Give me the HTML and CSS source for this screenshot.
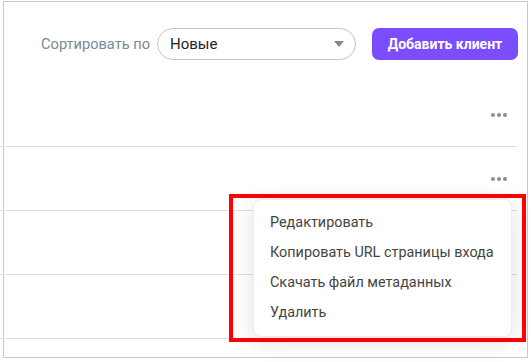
FILE: index.html
```html
<!DOCTYPE html>
<html lang="ru">
<head>
<meta charset="utf-8">
<link rel="stylesheet" href="styles.css">
</head>
<body>
<div class="frame">
  <div class="toolbar">
    <span class="sort-label">Сортировать по</span>
    <div class="select">
      <span class="select-value">Новые</span>
      <span class="caret"></span>
    </div>
    <button class="btn-add">Добавить клиент</button>
  </div>
  <div class="rows">
    <div class="row"><span class="dots"><i></i><i></i><i></i></span></div>
    <div class="row"><span class="dots"><i></i><i></i><i></i></span></div>
    <div class="row"></div>
    <div class="row"></div>
    <div class="row"></div>
  </div>
  <div class="menu">
    <div class="menu-item">Редактировать</div>
    <div class="menu-item">Копировать URL страницы входа</div>
    <div class="menu-item">Скачать файл метаданных</div>
    <div class="menu-item">Удалить</div>
  </div>
  <div class="highlight"></div>
</div>
</body>
</html>
```
FILE: styles.css
```css
* { box-sizing: border-box; }
html, body { margin: 0; padding: 0; background: #fff; }
body {
  font-family: Roboto, "Noto Sans", Arial, sans-serif;
  width: 531px;
  height: 362px;
  overflow: hidden;
}
.frame {
  position: relative;
  margin: 1px 0 0 3px;
  width: 525px;
  height: 357px;
  border: 1px solid #c9c9c9;
}
.toolbar {
  height: 81px;
  display: flex;
  align-items: center;
  justify-content: flex-end;
  padding-right: 9px;
  padding-top: 2px;
}
.sort-label {
  font-size: 14.6px;
  color: #7a8898;
  margin-right: 7px;
}
.select {
  width: 199px;
  height: 32px;
  border: 1px solid #c4c4c4;
  border-radius: 16px;
  display: flex;
  align-items: center;
  justify-content: space-between;
  padding: 0 11px 0 12px;
  margin-right: 16px;
}
.select-value {
  font-size: 15px;
  color: #222;
}
.caret {
  width: 0;
  height: 0;
  border-left: 5px solid transparent;
  border-right: 5px solid transparent;
  border-top: 6px solid #7c8b98;
}
.btn-add {
  width: 146px;
  height: 32px;
  border: none;
  border-radius: 7px;
  background: #7c4dff;
  color: #fff;
  font-family: Roboto, "Noto Sans", Arial, sans-serif;
  font-weight: 700;
  font-size: 14px;
  padding: 0;
}
.rows {
  margin-left: -4px;
  width: 517px;
  height: 274px;
  overflow: hidden;
}
.row {
  height: 64px;
  border-bottom: 1px solid #e2e2e2;
  display: flex;
  align-items: center;
  justify-content: flex-end;
  padding-right: 10px;
}
.dots {
  display: flex;
  gap: 2px;
}
.dots i {
  width: 4px;
  height: 4px;
  border-radius: 50%;
  background: #7f90a0;
}
.menu {
  position: absolute;
  left: 249px;
  top: 197px;
  width: 259px;
  height: 138px;
  background: #fff;
  border: 1px solid #ececec;
  border-radius: 8px;
  box-shadow: 0 4px 24px rgba(0, 0, 0, 0.12);
  padding: 8px 0 0 16px;
}
.menu-item {
  height: 30px;
  line-height: 30px;
  font-size: 14.4px;
  color: #444;
  white-space: nowrap;
}
.highlight {
  position: absolute;
  left: 225px;
  top: 192px;
  width: 297px;
  height: 148px;
  border: 4px solid #ff0000;
}
```
